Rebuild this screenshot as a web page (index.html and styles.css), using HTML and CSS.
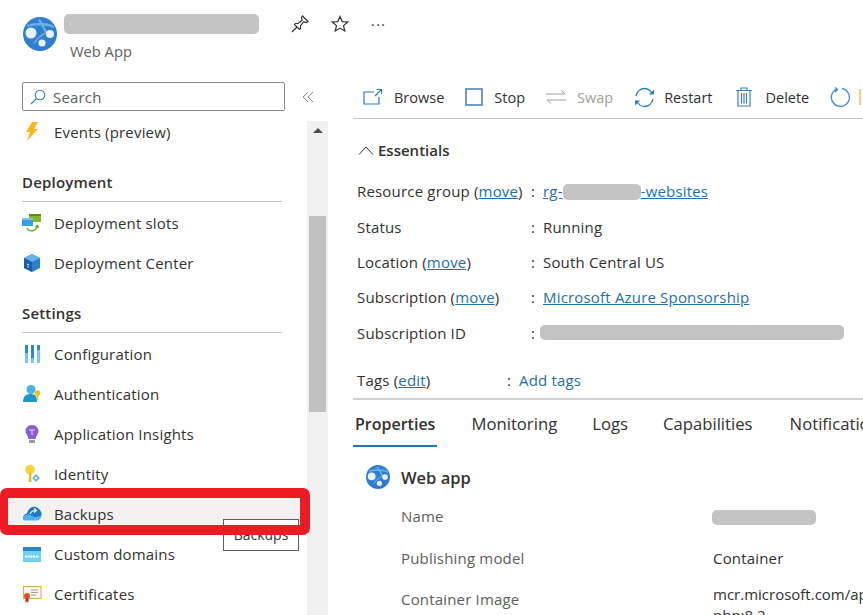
FILE: index.html
```html
<!DOCTYPE html>
<html lang="en">
<head>
<meta name="viewport" content="width=device-width, initial-scale=1.0">
<title>Web App</title>
<link rel="stylesheet" href="styles.css">
</head>
<body>

<svg class="defs" width="0" height="0">
  <symbol id="webapp" viewBox="0 0 34 34">
    <circle cx="17" cy="17" r="17" fill="#2f7fd0"/>
    <path d="M4 8 C12 5 24 5 31 9 L31 11 C24 8 12 8 5 10Z M17 2 L26 18 L24 19 L15 3Z" fill="#6fb0e8"/>
    <path d="M10 26 C14 20 20 14 28 14 L28 16 C21 16 15 22 12 27Z" fill="#5ca3e2"/>
    <circle cx="8" cy="16" r="5.5" fill="#e8f1fa"/>
    <circle cx="27" cy="17" r="4" fill="#e8f1fa"/>
    <circle cx="19" cy="26" r="3.6" fill="#e8f1fa"/>
  </symbol>
</svg>

<header class="page-head">
  <svg class="head-logo" width="34" height="34"><use href="#webapp"/></svg>
  <div class="head-text">
    <div class="head-title">
      <div class="mask mask-title"></div>
      <svg class="head-action" width="20" height="20" viewBox="0 0 20 20" fill="none" stroke="#323130" stroke-width="1.2"><path d="M12.5 2 L18 7.5 L16.5 8.5 L13.5 8 L10.5 12 L10.5 14.5 L9.5 15.5 L4.5 10.5 L5.5 9.5 L8 9.5 L12 6.5 L11.5 3.5Z M7 13 L2 18"/></svg>
      <svg class="head-action" width="20" height="20" viewBox="0 0 20 20" fill="none" stroke="#323130" stroke-width="1.2"><path d="M10 2.5 L12.2 7.6 L17.7 8 L13.5 11.6 L14.8 17 L10 14.1 L5.2 17 L6.5 11.6 L2.3 8 L7.8 7.6Z"/></svg>
      <span class="head-more">···</span>
    </div>
    <div class="head-sub">Web App</div>
  </div>
</header>

<div class="page-body">
  <aside class="sidebar">
    <div class="search-row">
      <div class="search-box">
        <svg width="16" height="16" viewBox="0 0 16 16" fill="none" stroke="#2f7fb5" stroke-width="1.1"><circle cx="10" cy="6" r="4.8"/><path d="M6.5 9.5 L1 15"/></svg>
        <span>Search</span>
      </div>
      <svg class="collapse" width="12" height="12" viewBox="0 0 12 12" fill="none" stroke="#8a8886" stroke-width="1"><path d="M6 1 L1 6 L6 11 M11 1 L6 6 L11 11"/></svg>
    </div>
    <div class="side-wrap">
      <nav class="side-list">
        <div class="side-item">
          <svg width="18" height="20" viewBox="0 0 18 20"><path d="M9 0 L15 0 L11 7 L15 7 L4 19 L7 10 L3 10Z" fill="#f7b71d"/></svg>
          <span>Events (preview)</span>
        </div>

        <div class="side-title">Deployment</div>
        <div class="side-item">
          <svg width="20" height="20" viewBox="0 0 20 20">
            <rect x="7" y="1" width="12" height="8" fill="#7fb82f"/><rect x="7" y="1" width="12" height="2" fill="#5b8f1f"/>
            <rect x="0" y="5" width="11" height="8" fill="#3aa0dc"/><rect x="0" y="5" width="11" height="2" fill="#7cc6ee"/>
            <path d="M5 15 C7 19 13 19 15 14" fill="none" stroke="#6aa82a" stroke-width="1.4"/><path d="M12.5 14 L15.5 11.5 L17.5 15Z" fill="#6aa82a"/>
          </svg>
          <span>Deployment slots</span>
        </div>
        <div class="side-item">
          <svg width="20" height="20" viewBox="0 0 20 20">
            <path d="M10 1 L18 5 L18 15 L10 19 L2 15 L2 5Z" fill="#2c7fd0"/>
            <path d="M10 1 L18 5 L10 9 L2 5Z" fill="#66b3ec"/>
            <path d="M2 5 L10 9 L10 19 L2 15Z" fill="#1a5fa8"/>
            <path d="M6 15 L6 11 M4.8 12 L6 10.8 L7.2 12" fill="none" stroke="#cfe6f8" stroke-width=".8"/>
          </svg>
          <span>Deployment Center</span>
        </div>

        <div class="side-title">Settings</div>
        <div class="side-item">
          <svg width="20" height="20" viewBox="0 0 20 20">
            <rect x="3" y="1" width="3" height="18" fill="#7cc6ee"/><rect x="3" y="1" width="3" height="8" fill="#2a8ac8"/>
            <rect x="9" y="1" width="3" height="18" fill="#7cc6ee"/><rect x="9" y="1" width="3" height="13" fill="#2a8ac8"/>
            <rect x="15" y="1" width="3" height="18" fill="#7cc6ee"/><rect x="15" y="1" width="3" height="5" fill="#2a8ac8"/>
          </svg>
          <span>Configuration</span>
        </div>
        <div class="side-item">
          <svg width="20" height="20" viewBox="0 0 20 20">
            <circle cx="9" cy="5.5" r="4.5" fill="#45b4e6"/>
            <path d="M1 18 C1 12 4 10 9 10 C14 10 15 13 15 18Z" fill="#1f97c9"/>
            <circle cx="15.5" cy="9" r="2.8" fill="#f2c21b"/><rect x="14.6" y="10" width="1.8" height="6" fill="#f2c21b"/>
          </svg>
          <span>Authentication</span>
        </div>
        <div class="side-item">
          <svg width="20" height="20" viewBox="0 0 20 20">
            <path d="M10 1 C14 1 16.5 4 16.5 7 C16.5 10 14 11.5 13.5 15 L6.5 15 C6 11.5 3.5 10 3.5 7 C3.5 4 6 1 10 1Z" fill="#8a5fd6"/>
            <path d="M7 6 L13 6 M10 6 L10 11" stroke="#e3d8f6" stroke-width="1" fill="none"/>
            <rect x="7" y="16" width="6" height="3" fill="#a19f9d"/>
          </svg>
          <span>Application Insights</span>
        </div>
        <div class="side-item">
          <svg width="20" height="20" viewBox="0 0 20 20">
            <circle cx="8" cy="5.5" r="4.8" fill="#f5d33c"/>
            <rect x="6.8" y="9" width="2.6" height="9" fill="#e6bc24"/>
            <path d="M14 10 L18 14 L14 18 L10 14Z" fill="#6fb4dc"/><path d="M14 12.5 L15.5 14 L14 15.5 L12.5 14Z" fill="#ffffff"/>
          </svg>
          <span>Identity</span>
        </div>
        <div class="side-item is-active">
          <svg width="20" height="20" viewBox="0 0 20 20">
            <path d="M1 14.500 C1 11 3.500 9.500 5 9.500 C6 5 10 2 13.500 3 C17 4 19.500 7 19.500 10 C19.500 13 17.500 15.500 15 15.500 L3 15.500 C1.500 15.500 1 15 1 14.500Z" fill="#1f78c8"/>
            <path d="M1 14.500 C1 12 3 10.500 5.500 10.500 C9 10.500 10 13 14 13 C17 13 19 12 19.500 10 C19.500 13 17.500 16.500 15 16.500 L3 16.500 C1.500 16.500 1 15.500 1 14.500Z" fill="#50b3ee"/>
            <path d="M8 10 C9 7.500 11 6.500 13.500 6.500 M12 4.500 L14.500 6.500 L12 8.500" fill="none" stroke="#ffffff" stroke-width="1.200"/>
          </svg>
          <span>Backups</span>
        </div>
        <div class="side-item">
          <svg width="20" height="20" viewBox="0 0 20 20">
            <rect x="1" y="3" width="18" height="15" fill="#6fd0f2"/>
            <rect x="1" y="3" width="18" height="4" fill="#2a86c8"/>
            <path d="M3 12.500 L17 12.500" stroke="#ffffff" stroke-width="2" stroke-dasharray="2 .7"/>
          </svg>
          <span>Custom domains</span>
        </div>
        <div class="side-item">
          <svg width="20" height="20" viewBox="0 0 20 20">
            <rect x="1.500" y="2.500" width="17.500" height="12" fill="#fff6e4" stroke="#eaa848"/>
            <path d="M9 6 L16 6 M9 8.500 L16 8.500 M9 11 L14 11" stroke="#a19f9d" stroke-width="1"/>
            <circle cx="5" cy="12" r="3" fill="#d8512a"/><path d="M3.500 14 L3.500 19 L5 17.500 L6.500 19 L6.500 14Z" fill="#b83c1c"/>
          </svg>
          <span>Certificates</span>
        </div>
      </nav>
      <div class="scrollbar">
        <div class="scroll-up"></div>
        <div class="scroll-thumb"></div>
      </div>
    </div>
  </aside>

  <main class="main">
    <div class="toolbar">
      <div class="tool">
        <svg width="20" height="18" viewBox="0 0 20 18" fill="none" stroke="#2f7fb5" stroke-width="1.200"><path d="M11 4 L1 4 L1 16 L16 16 L16 9 M12 8 L18 2 M13.500 1.500 L18.500 1.500 L18.500 6"/></svg>
        <span>Browse</span>
      </div>
      <div class="tool">
        <svg width="18" height="18" viewBox="0 0 18 18" fill="none" stroke="#4f84b5" stroke-width="1.600"><rect x="1" y="1" width="16" height="16"/></svg>
        <span>Stop</span>
      </div>
      <div class="tool is-off">
        <svg width="20" height="16" viewBox="0 0 20 16" fill="none" stroke="#a19f9d" stroke-width="1"><path d="M0 5 L19 5 M15 1.500 L19 5 M20 11 L1 11 M5 14.500 L1 11"/></svg>
        <span>Swap</span>
      </div>
      <div class="tool tool-restart">
        <svg width="21" height="21" viewBox="0 0 21 21" fill="none" stroke="#2f7fb5" stroke-width="1.300"><path d="M2 9 C3 4.500 6.500 1.500 10.500 1.500 C13.500 1.500 16 3 18 6 M19 12 C18 16.500 14.500 19.500 10.500 19.500 C7.500 19.500 5 18 3 15"/><path d="M20 2.500 L20 7.500 L15 7.500Z M1 18.500 L1 13.500 L6 13.500Z" fill="#2f7fb5" stroke="none"/></svg>
        <span>Restart</span>
      </div>
      <div class="tool tool-delete">
        <svg width="16" height="20" viewBox="0 0 16 20" fill="none" stroke="#3e7fb5" stroke-width="1.200"><path d="M0 3.500 L16 3.500 M5 3.500 L5 1 L11 1 L11 3.500 M2 3.500 L2 19 L14 19 L14 3.500 M5.500 6 L5.500 16.500 M8 6 L8 16.500 M10.500 6 L10.500 16.500"/></svg>
        <span>Delete</span>
      </div>
      <div class="tool tool-last">
        <svg width="21" height="21" viewBox="0 0 21 21" fill="none" stroke="#3e8fc4" stroke-width="1.300"><path d="M7 2 A9 9 0 1 0 12 1.500 M5 0.500 L7.500 2.500 L5 5"/></svg>
        <svg width="6" height="18" viewBox="0 0 6 18"><rect x="0" y="1" width="2" height="16" fill="#f2d27a"/></svg>
      </div>
    </div>

    <div class="ess-head">
      <svg width="16" height="9" viewBox="0 0 16 9" fill="none" stroke="#323130" stroke-width="1"><path d="M1 8.500 L8 1 L15 8.500"/></svg>
      <span>Essentials</span>
    </div>

    <div class="ess-row">
      <div class="ess-label">Resource group (<a href="#">move</a>)</div>
      <div class="ess-colon">:</div>
      <div class="ess-value"><a href="#">rg-<span class="mask mask-rg"></span>-websites</a></div>
    </div>
    <div class="ess-row">
      <div class="ess-label">Status</div>
      <div class="ess-colon">:</div>
      <div class="ess-value">Running</div>
    </div>
    <div class="ess-row">
      <div class="ess-label">Location (<a href="#">move</a>)</div>
      <div class="ess-colon">:</div>
      <div class="ess-value">South Central US</div>
    </div>
    <div class="ess-row">
      <div class="ess-label">Subscription (<a href="#">move</a>)</div>
      <div class="ess-colon">:</div>
      <div class="ess-value"><a href="#">Microsoft Azure Sponsorship</a></div>
    </div>
    <div class="ess-row">
      <div class="ess-label">Subscription ID</div>
      <div class="ess-colon">:</div>
      <div class="ess-value"><div class="mask mask-sub"></div></div>
    </div>
    <div class="ess-row tags-row">
      <div class="ess-label tags-label">Tags (<a href="#">edit</a>)</div>
      <div class="ess-colon">:</div>
      <div class="ess-value"><a href="#" class="plain">Add tags</a></div>
    </div>

    <div class="tabs">
      <div class="tab is-active">Properties</div>
      <div class="tab">Monitoring</div>
      <div class="tab">Logs</div>
      <div class="tab">Capabilities</div>
      <div class="tab">Notifications</div>
    </div>

    <div class="props-head">
      <svg width="24" height="24"><use href="#webapp"/></svg>
      <span>Web app</span>
    </div>
    <div class="prop-row">
      <div class="prop-label">Name</div>
      <div class="prop-value"><div class="mask mask-name"></div></div>
    </div>
    <div class="prop-row">
      <div class="prop-label">Publishing model</div>
      <div class="prop-value">Container</div>
    </div>
    <div class="prop-row">
      <div class="prop-label">Container Image</div>
      <div class="prop-value prop-multi">mcr.microsoft.com/ap<br>php:8.2</div>
    </div>
  </main>
</div>

<div class="tooltip">Backups</div>
<div class="red-frame"></div>

</body>
</html>
```

FILE: styles.css
```css
html, body {
  height: 100%;
}

body {
  margin: 0;
  position: relative;
  overflow: hidden;
  background-color: #fff;
  color: #323130;
  font-family: "Open Sans", "Noto Sans", Arial, sans-serif;
  font-size: 15px;
  letter-spacing: .18px;
}

a {
  color: #1f6fa8;
}

a.plain {
  text-decoration: none;
}

.defs {
  position: absolute;
}

.mask {
  background-color: #c4c4c4;
  border-radius: 5px;
}

/* header */
.page-head {
  display: flex;
  height: 82px;
  padding-left: 23px;
  box-sizing: border-box;
}

.head-logo {
  margin-top: 17px;
  margin-right: 7px;
}

.head-text {
  padding-top: 14px;
}

.head-title {
  display: flex;
  align-items: center;
  height: 20px;
}

.mask-title {
  width: 195px;
  height: 20px;
  margin-right: 31px;
}

.head-action {
  margin-right: 20px;
}

.head-more {
  margin-left: 1px;
  font-size: 14px;
  letter-spacing: 1.500px;
  color: #323130;
}

.head-sub {
  margin-top: 8px;
  margin-left: 6px;
  color: #605e5c;
  font-size: 14.700px;
  letter-spacing: 0;
  line-height: 19px;
}

/* sidebar */
.page-body {
  display: flex;
}

.sidebar {
  width: 328px;
  flex-shrink: 0;
}

.search-row {
  display: flex;
  align-items: flex-start;
  height: 30px;
  padding-left: 22px;
}

.search-box {
  display: flex;
  align-items: center;
  gap: 7px;
  width: 263px;
  height: 29px;
  box-sizing: border-box;
  padding-left: 7px;
  border: 1px solid #8a8886;
  border-radius: 2px;
  color: #605e5c;
}

.collapse {
  margin-left: 17px;
  margin-top: 9px;
}

.side-wrap {
  display: flex;
  height: 503px;
}

.side-list {
  width: 307px;
  flex-shrink: 0;
}

.side-item {
  display: flex;
  align-items: center;
  gap: 12px;
  height: 40px;
  padding-left: 22px;
  box-sizing: border-box;
  margin-right: 7px;
}

.side-item svg {
  width: 20px;
  flex-shrink: 0;
}

.side-item.is-active {
  background-color: #f3f2f1;
}

.side-title {
  height: 50px;
  margin: 0 25px 1px 22px;
  padding-top: 21px;
  box-sizing: border-box;
  border-bottom: 1px solid #c8c6c4;
  font-weight: 600;
  line-height: 19px;
}

.scrollbar {
  display: flex;
  flex-direction: column;
  width: 21px;
  margin-top: 9px;
  padding: 0 2px;
  box-sizing: border-box;
  background-color: #f1f1f1;
}

.scroll-up {
  width: 0;
  height: 0;
  margin: 7px auto 0;
  border-left: 5px solid transparent;
  border-right: 5px solid transparent;
  border-bottom: 5px solid #505050;
}

.scroll-thumb {
  height: 196px;
  margin-top: 83px;
  background-color: #c1c1c1;
}

/* main column */
.main {
  flex: 1;
  min-width: 0;
  margin-left: 25px;
  overflow: hidden;
  white-space: nowrap;
}

.toolbar {
  display: flex;
  align-items: center;
  gap: 21px;
  height: 30px;
  padding-left: 10px;
  padding-bottom: 6px;
  border-bottom: 1px solid #c8c6c4;
  font-size: 14.500px;
  letter-spacing: 0;
}

.tool {
  display: flex;
  align-items: center;
  flex-shrink: 0;
  gap: 11px;
}

.tool.is-off {
  color: #a19f9d;
}

.tool-restart {
  gap: 9px;
}

.tool-delete {
  gap: 13px;
  margin-left: 3px;
}

.tool-last {
  gap: 8px;
}

.ess-head {
  display: flex;
  align-items: center;
  gap: 4px;
  height: 32px;
  margin-top: 15px;
  margin-left: 5px;
  margin-bottom: 7.500px;
  font-weight: 600;
  letter-spacing: 0;
}

.ess-row {
  display: flex;
  align-items: center;
  height: 35.4px;
  padding-left: 4px;
}

.ess-label {
  width: 176px;
  flex-shrink: 0;
}

.tags-row {
  margin-top: 12px;
}

.tags-label {
  width: 152px;
}

.ess-colon {
  width: 12px;
  margin-left: -2px;
  flex-shrink: 0;
}

.mask-rg {
  display: inline-block;
  width: 78px;
  height: 16px;
  vertical-align: -3px;
}

.mask-sub {
  width: 304px;
  height: 15px;
  margin-left: -3px;
}

.tabs {
  display: flex;
  gap: 31px;
  height: 47.500px;
  border-top: 2px solid #d2d0ce;
  box-sizing: content-box;
  font-size: 16.700px;
  letter-spacing: 0;
}

.tab {
  padding: 12.500px 2px 0;
  box-sizing: border-box;
  height: 47.500px;
  line-height: 24px;
}

.tab.is-active {
  margin-right: 1px;
  border-bottom: 2px solid #1b7aa8;
  font-size: 16px;
  font-weight: 600;
}

.tab:last-child {
  margin-left: 2px;
}

.props-head {
  display: flex;
  align-items: center;
  gap: 11px;
  height: 24px;
  margin-top: 18px;
  margin-left: 13px;
  font-size: 16.500px;
  font-weight: 600;
  letter-spacing: 0;
}

.prop-row {
  display: flex;
  align-items: center;
  height: 41.500px;
  margin-left: 48px;
}

.props-head + .prop-row {
  margin-top: 6px;
}

.prop-label {
  width: 312px;
  flex-shrink: 0;
  color: #605e5c;
}

.mask-name {
  width: 104px;
  height: 15px;
  margin-left: -1px;
  margin-top: 2px;
}

.prop-multi {
  margin-top: 12px;
  line-height: 21px;
  letter-spacing: 0;
}

/* overlays */
.tooltip {
  position: absolute;
  left: 223px;
  top: 519px;
  width: 76px;
  height: 32px;
  box-sizing: border-box;
  border: 1px solid #605e5c;
  background-color: #fff;
  text-align: center;
  font-size: 14px;
  letter-spacing: 0;
  line-height: 29px;
}

.red-frame {
  position: absolute;
  left: 0;
  top: 488px;
  width: 310px;
  height: 47px;
  box-sizing: border-box;
  border: 10px solid #ed1c24;
  border-left-width: 8px;
  border-radius: 7px;
}
```
